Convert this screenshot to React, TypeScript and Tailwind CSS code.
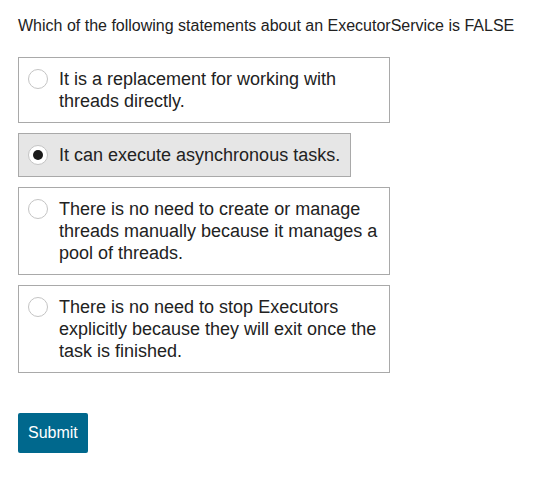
import { useState } from "react";

const options = [
  "It is a replacement for working with threads directly.",
  "It can execute asynchronous tasks.",
  "There is no need to create or manage threads manually because it manages a pool of threads.",
  "There is no need to stop Executors explicitly because they will exit once the task is finished.",
];

export default function App() {
  const [selected, setSelected] = useState(1);

  return (
    <div className="min-h-screen bg-white px-[18px] pt-[16px] font-['Liberation_Sans',Arial,sans-serif] text-[#222]">
      <p className="text-[16px] leading-[20px]">Which of the following statements about an ExecutorService is FALSE</p>
      <div className="mt-[21px] flex flex-col items-start gap-[10px]">
        {options.map((text, i) => {
          const active = i === selected;
          return (
            <label
              key={i}
              onClick={() => setSelected(i)}
              className={`flex max-w-[372px] cursor-pointer items-start gap-[11px] border border-[#a9a9a9] py-[10px] pl-[9px] pr-[10px] ${
                active ? "bg-[#e6e6e6]" : "bg-white"
              }`}
            >
              <span className="mt-[1px] flex h-[20px] w-[20px] shrink-0 items-center justify-center rounded-full border border-[#c4c4c4] bg-white">
                {active ? <span className="h-[10px] w-[10px] rounded-full bg-[#1a1a1a]" /> : null}
              </span>
              <span className="text-[18px] leading-[22px]">{text}</span>
            </label>
          );
        })}
      </div>
      <button className="mt-[40px] rounded-[2px] bg-[#00688d] px-[10px] py-[10px] text-[16px] leading-[20px] text-white">
        Submit
      </button>
    </div>
  );
}
